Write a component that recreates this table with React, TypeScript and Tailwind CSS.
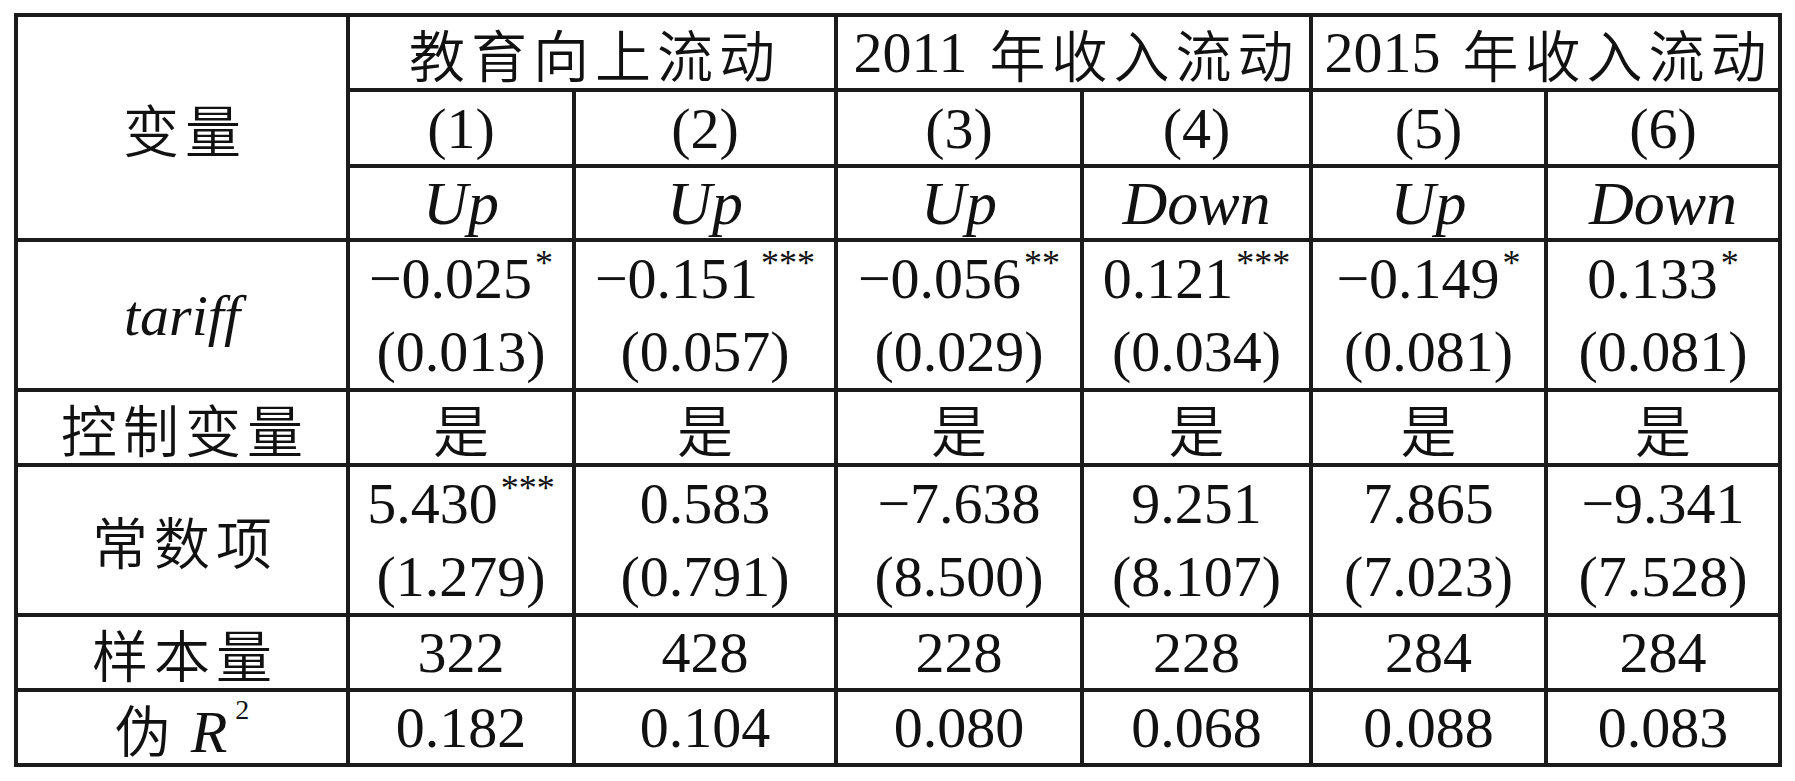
const serif = "font-['Liberation_Serif',serif]";
const cjkFont = "font-['Noto_Sans_CJK_SC',sans-serif] font-[350]";
const cjk = `${cjkFont} text-[56px] tracking-[6px] -mr-[6px]`;
const cell = "bg-white flex items-center justify-center text-[#111]";

type Coef = { v: string; s?: string; se: string };

const cols = ["(1)", "(2)", "(3)", "(4)", "(5)", "(6)"];
const dirs = ["Up", "Up", "Up", "Down", "Up", "Down"];

const tariff: Coef[] = [
  { v: "−0.025", s: "*", se: "(0.013)" },
  { v: "−0.151", s: "***", se: "(0.057)" },
  { v: "−0.056", s: "**", se: "(0.029)" },
  { v: "0.121", s: "***", se: "(0.034)" },
  { v: "−0.149", s: "*", se: "(0.081)" },
  { v: "0.133", s: "*", se: "(0.081)" },
];

const constant: Coef[] = [
  { v: "5.430", s: "***", se: "(1.279)" },
  { v: "0.583", se: "(0.791)" },
  { v: "−7.638", se: "(8.500)" },
  { v: "9.251", se: "(8.107)" },
  { v: "7.865", se: "(7.023)" },
  { v: "−9.341", se: "(7.528)" },
];

const n = ["322", "428", "228", "228", "284", "284"];
const r2 = ["0.182", "0.104", "0.080", "0.068", "0.088", "0.083"];

function Stars({ s }: { s?: string }) {
  if (!s) return null;
  return <span className="align-top text-[36px] leading-none ml-[3px] relative top-[3px]">{s}</span>;
}

function CoefCell({ c }: { c: Coef }) {
  return (
    <div className={`${cell} flex-col ${serif} text-[58px]`}>
      <div className="h-[73px] leading-[73px] whitespace-nowrap">
        {c.v}
        <Stars s={c.s} />
      </div>
      <div className="h-[73px] leading-[73px] whitespace-nowrap">{c.se}</div>
    </div>
  );
}

function YearHead({ year }: { year: string }) {
  return (
    <div className={`${cell} col-span-2`}>
      <span className={`${serif} text-[58px] mr-[22px]`}>{year}</span>
      <span className={cjk}>年收入流动</span>
    </div>
  );
}

export default function App() {
  return (
    <div className="min-h-screen bg-white pt-[13px] pl-[14px]">
      <div className="grid w-fit grid-cols-[328px_222px_258px_242px_225px_231px_230px] grid-rows-[71px_72px_70px_146px_71px_146px_71px_71px] gap-[4px] p-[4px] bg-[#1b1b1b]">
        <div className={`${cell} row-span-3`}>
          <span className={cjk}>变量</span>
        </div>
        <div className={`${cell} col-span-2`}>
          <span className={cjk}>教育向上流动</span>
        </div>
        <YearHead year="2011" />
        <YearHead year="2015" />

        {cols.map((c) => (
          <div key={c} className={`${cell} ${serif} text-[58px]`}>
            {c}
          </div>
        ))}
        {dirs.map((d, i) => (
          <div key={i} className={`${cell} ${serif} text-[62px] italic`}>
            {d}
          </div>
        ))}

        <div className={`${cell} ${serif} text-[58px] italic`}>tariff</div>
        {tariff.map((c, i) => (
          <CoefCell key={i} c={c} />
        ))}

        <div className={cell}>
          <span className={cjk}>控制变量</span>
        </div>
        {n.map((_, i) => (
          <div key={i} className={cell}>
            <span className={cjk}>是</span>
          </div>
        ))}

        <div className={cell}>
          <span className={cjk}>常数项</span>
        </div>
        {constant.map((c, i) => (
          <CoefCell key={i} c={c} />
        ))}

        <div className={cell}>
          <span className={cjk}>样本量</span>
        </div>
        {n.map((v, i) => (
          <div key={i} className={`${cell} ${serif} text-[58px]`}>
            {v}
          </div>
        ))}

        <div className={cell}>
          <span className="h-[71px] leading-[71px] whitespace-nowrap">
            <span className={`${cjkFont} text-[56px]`}>伪</span>
            <span className={`${serif} text-[60px] italic ml-[20px]`}>R</span>
            <span className={`${serif} text-[28px] align-top leading-none ml-[8px] relative top-[4px]`}>2</span>
          </span>
        </div>
        {r2.map((v, i) => (
          <div key={i} className={`${cell} ${serif} text-[58px]`}>
            {v}
          </div>
        ))}
      </div>
    </div>
  );
}
